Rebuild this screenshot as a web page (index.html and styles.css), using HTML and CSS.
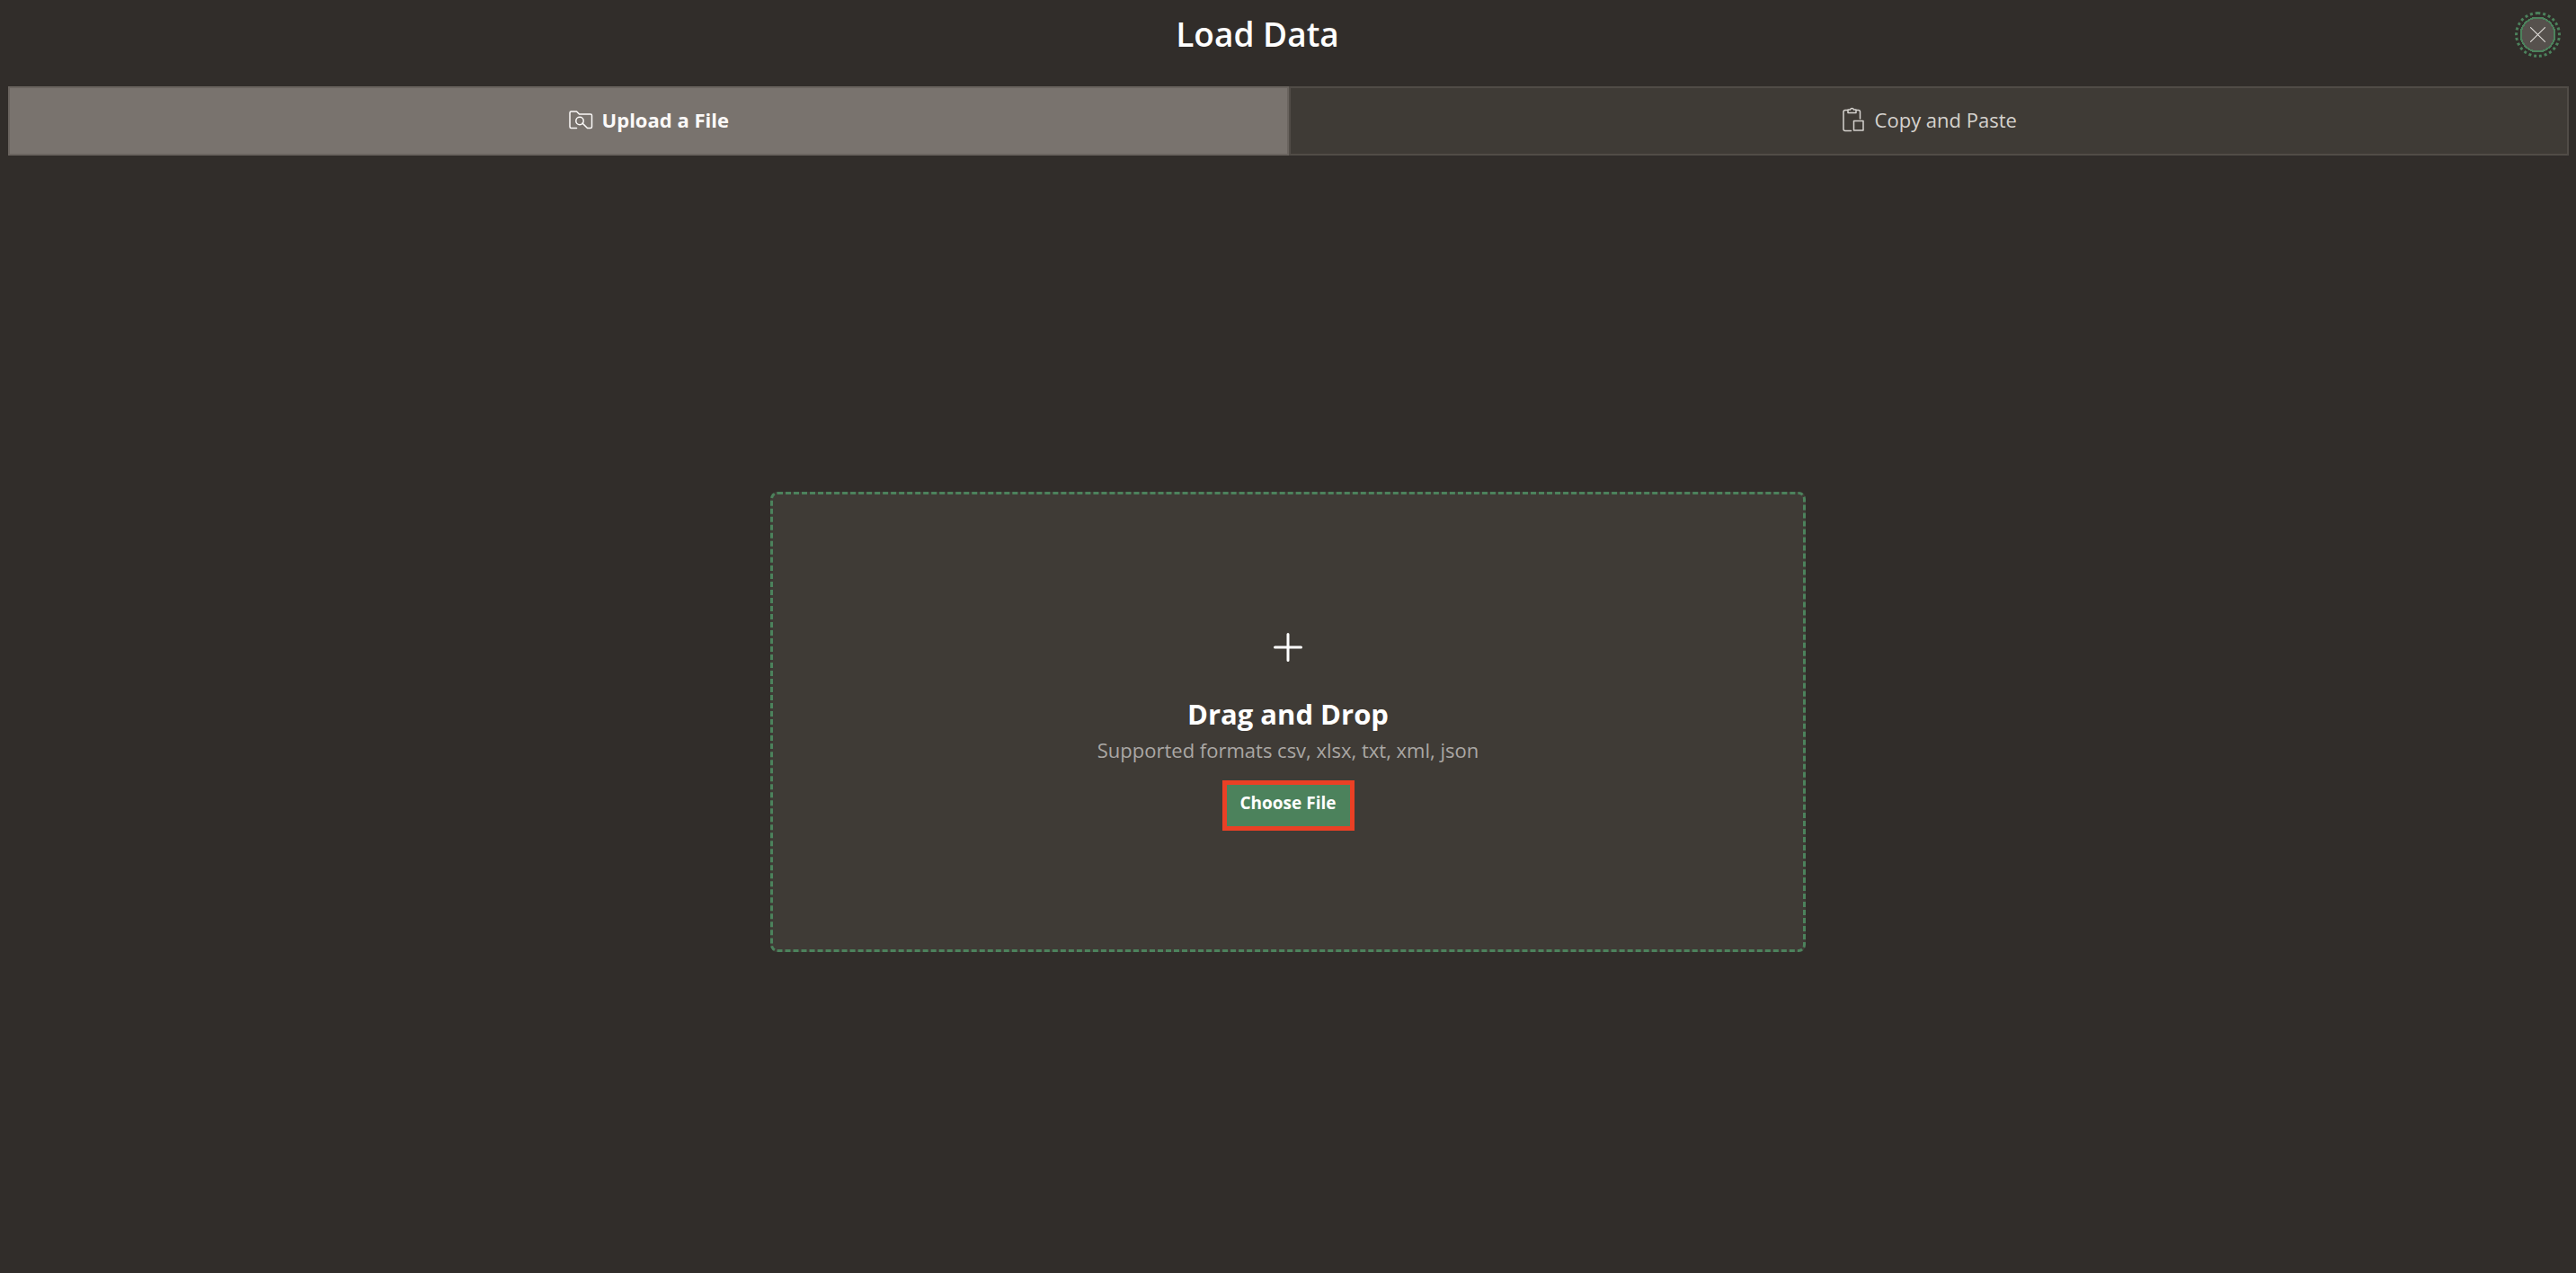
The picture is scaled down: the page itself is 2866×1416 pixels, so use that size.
FILE: index.html
```html
<!DOCTYPE html>
<html lang="en">
<head>
<meta charset="utf-8">
<title>Load Data</title>
<link rel="stylesheet" href="styles.css">
</head>
<body>
<header class="header">
  <h1 class="title">Load Data</h1>
  <button class="close" type="button" aria-label="Close">
    <svg class="close-icon" viewBox="0 0 16 16" aria-hidden="true"><path d="M0.5 0.5L15.5 15.5M15.5 0.5L0.5 15.5"/></svg>
  </button>
</header>
<nav class="tabs" role="tablist">
  <button class="tab tab-active" type="button" role="tab" aria-selected="true">
    <svg class="tab-icon" viewBox="0 0 28 28" aria-hidden="true"><path d="M9.5 23.500H3.500Q2 23.500 2 22V6.500Q2 5 3.500 5H9.500L12.500 8H25Q26.500 8 26.500 9.500V22Q26.500 23.500 25 23.500H21.500L16 18"/><circle cx="13" cy="15.500" r="4.200"/></svg>
    <span>Upload a File</span>
  </button>
  <button class="tab" type="button" role="tab" aria-selected="false">
    <svg class="tab-icon" viewBox="0 0 28 28" aria-hidden="true"><path d="M11.500 26.500H5Q3 26.500 3 24.500V5.500Q3 3.500 5 3.500H8M17 3.500H19.500Q21.500 3.500 21.500 5.500V13M8 3H10.500Q11 1.500 12.500 1.500T14.500 3H17V6.500H8ZM14.500 15.500H25V26H14.500Z"/></svg>
    <span>Copy and Paste</span>
  </button>
</nav>
<main class="panel">
  <section class="dropzone">
    <svg class="plus" viewBox="0 0 32 32" aria-hidden="true"><path d="M16 1.500V30.500M1.500 16H30.500"/></svg>
    <h2 class="drop-title">Drag and Drop</h2>
    <p class="formats">Supported formats csv, xlsx, txt, xml, json</p>
    <button class="choose" type="button">Choose File</button>
  </section>
</main>
</body>
</html>
```
FILE: styles.css
```css
* { box-sizing: border-box; }

body {
  margin: 0;
  min-height: 100vh;
  display: flex;
  flex-direction: column;
  background: #312d2a;
  color: #fff;
  font-family: "Open Sans", "Noto Sans", sans-serif;
}

button { font: inherit; color: inherit; cursor: pointer; }

svg {
  fill: none;
  stroke: currentColor;
  stroke-linecap: round;
  stroke-linejoin: round;
}

.header {
  display: flex;
  align-items: center;
  height: 96px;
  padding: 0 17px 20px 0;
}

.title {
  flex: 1;
  margin: 0;
  text-align: center;
  font-size: 37px;
  line-height: 48px;
  font-weight: 600;
}

.close {
  display: grid;
  place-items: center;
  width: 51px;
  height: 51px;
  padding: 0;
  border: 3px dotted #4c825c;
  border-radius: 50%;
  background: radial-gradient(circle, #56514d 0 18px, #4c825c 18px 20px, transparent 20px);
  color: #e4e1dd;
}

.close-icon { width: 17px; height: 17px; }

.tabs {
  display: grid;
  grid-template-columns: 1fr 1fr;
  margin: 0 8px 0 9px;
}

.tab {
  display: flex;
  align-items: center;
  justify-content: center;
  gap: 10px;
  height: 77px;
  padding: 0 0 4px;
  border: 2px solid #514c47;
  background: #3f3b36;
  color: #d5d2ce;
  font-size: 22px;
  line-height: 32px;
}

.tab-active {
  border-color: #6a645f;
  background: #79736e;
  color: #fbf9f8;
  font-weight: 700;
}

.tab-icon { width: 28px; height: 28px; stroke-width: 1.5; }

.panel {
  flex: 1;
  display: grid;
  place-items: center;
  padding-top: 17px;
}

.dropzone {
  display: flex;
  flex-direction: column;
  align-items: center;
  justify-content: center;
  width: 1152px;
  max-width: 100%;
  min-height: 512px;
  padding-top: 21px;
  border: 3px dashed #4c825c;
  border-radius: 8px;
  background: #3f3b36;
}

.plus { width: 32px; height: 32px; stroke-width: 3; }

.drop-title {
  margin: 36px 0 0;
  font-size: 31px;
  line-height: 44px;
  font-weight: 700;
}

.formats {
  margin: 0;
  color: #aaa7a4;
  font-size: 22px;
  line-height: 36px;
}

.choose {
  width: 147px;
  height: 56px;
  margin-top: 16px;
  padding: 0 0 6px;
  border: 5px solid #ea4025;
  background: #4c825c;
  font-size: 19px;
  font-weight: 700;
}
```
